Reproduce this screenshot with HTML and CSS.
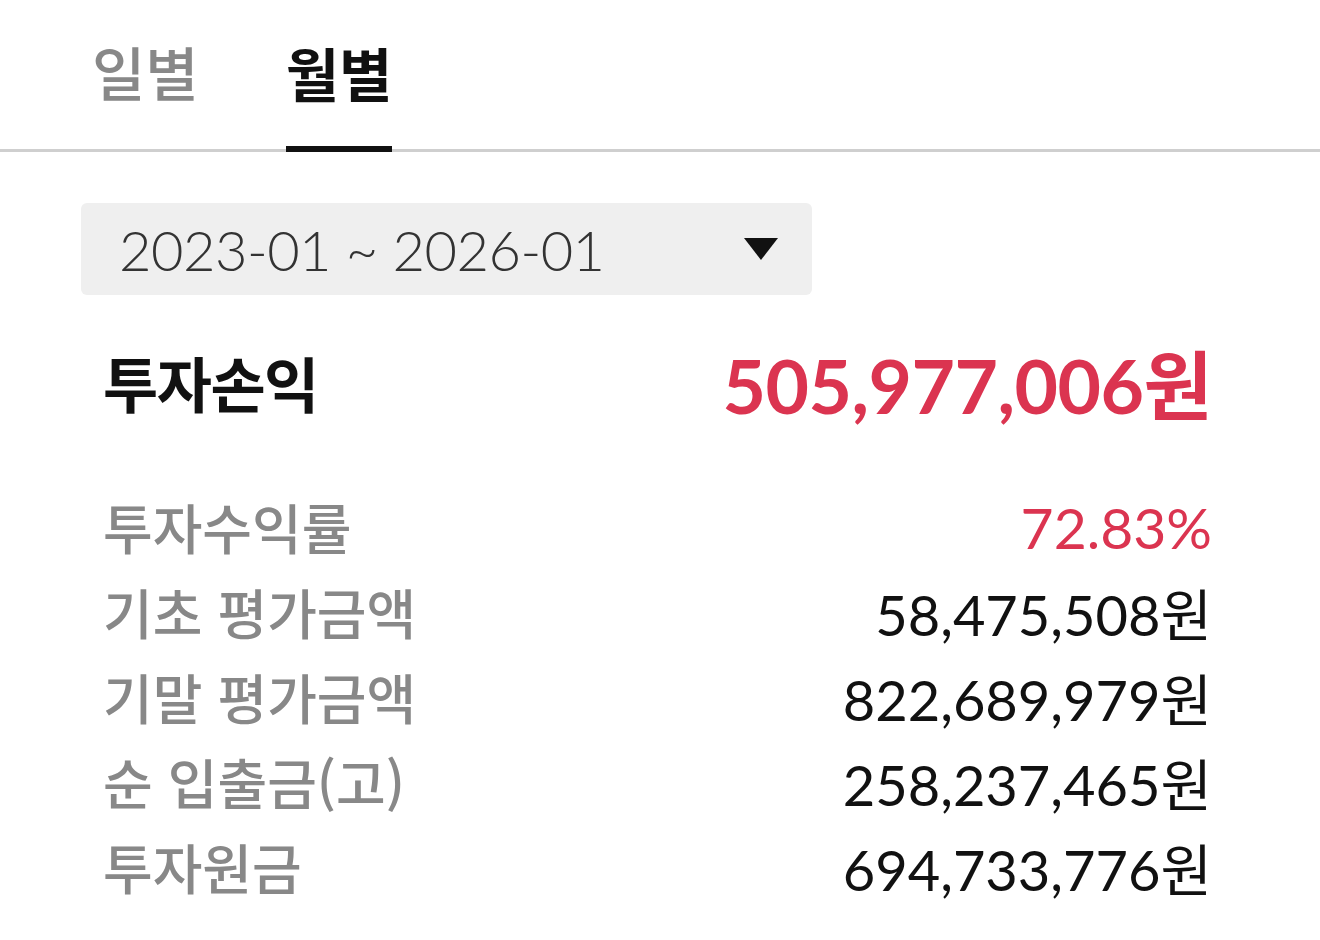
FILE: index.html
```html
<!DOCTYPE html>
<html lang="ko">

<head>
    <meta charset="UTF-8">
    <title>투자손익</title>
    <link rel="stylesheet" href="styles.css">
</head>

<body>

    <div class="tabs">
        <div class="tab">일별</div>
        <div class="tab active">월별</div>
    </div>

    <div class="content">
        <div class="period-select">
            <span class="period-text">2023-01 ~ 2026-01</span>
            <span class="caret"></span>
        </div>

        <div class="summary">
            <span class="summary-label">투자손익</span>
            <span class="summary-value">505,977,006원</span>
        </div>

        <div class="details">
            <div class="row">
                <span class="label">투자수익률</span>
                <span class="value red">72.83%</span>
            </div>
            <div class="row">
                <span class="label">기초 평가금액</span>
                <span class="value">58,475,508원</span>
            </div>
            <div class="row">
                <span class="label">기말 평가금액</span>
                <span class="value">822,689,979원</span>
            </div>
            <div class="row">
                <span class="label">순 입출금(고)</span>
                <span class="value">258,237,465원</span>
            </div>
            <div class="row">
                <span class="label">투자원금</span>
                <span class="value">694,733,776원</span>
            </div>
        </div>
    </div>

</body>

</html>
```

FILE: styles.css
```css
body {
    margin: 0;
    background: #fff;
    font-family: "Lato", "Noto Sans CJK KR", sans-serif;
    color: #111;
}

/* 상단 탭 */
.tabs {
    display: flex;
    gap: 87px;
    padding-left: 92px;
    height: 149px;
    border-bottom: 3px solid #cfcfcf;
}

.tab {
    font-family: "Noto Sans CJK KR", sans-serif;
    font-size: 58px;
    font-weight: 500;
    color: #888;
    display: flex;
    align-items: center;
    padding-bottom: 8px;
    box-sizing: border-box;
}

.tab.active {
    color: #111;
    font-weight: 700;
    border-bottom: 6px solid #111;
    margin-bottom: -3px;
    height: 152px;
    padding-top: 6px;
}

.content {
    padding: 51px 108px 0 81px;
}

.period-select {
    width: 731px;
    height: 92px;
    background: #efefef;
    border-radius: 6px;
    display: flex;
    align-items: center;
    justify-content: space-between;
    padding: 0 34px 0 38px;
    box-sizing: border-box;
}

.period-text {
    font-size: 56px;
    font-weight: 300;
    color: #333;
    letter-spacing: -0.5px;
}

.caret {
    width: 0;
    height: 0;
    border-left: 17px solid transparent;
    border-right: 17px solid transparent;
    border-top: 22px solid #111;
}

.summary {
    display: flex;
    justify-content: space-between;
    align-items: center;
    height: 90px;
    padding-left: 22px;
    margin-top: 41px;
}

.summary-label {
    font-family: "Noto Sans CJK KR", sans-serif;
    font-size: 60px;
    font-weight: 700;
    color: #111;
    letter-spacing: -1.5px;
}

.summary-value {
    font-size: 75px;
    font-weight: 700;
    color: #db3450;
    letter-spacing: -0.5px;
}

.details {
    margin-top: 58px;
    padding-left: 22px;
}

.row {
    display: flex;
    justify-content: space-between;
    align-items: center;
    height: 85px;
}

.label {
    font-family: "Noto Sans CJK KR", sans-serif;
    font-size: 54px;
    font-weight: 500;
    color: #888;
}

.value {
    font-size: 56px;
    color: #111;
}

.value.red {
    color: #db3450;
    font-size: 57px;
}
```
